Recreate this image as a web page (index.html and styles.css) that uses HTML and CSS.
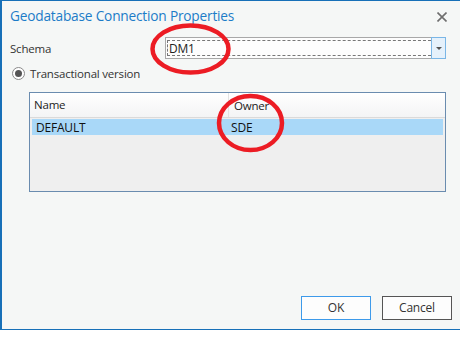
FILE: index.html
```html
<!DOCTYPE html>
<html lang="en">
<head>
  <meta charset="UTF-8">
  <title>Geodatabase Connection Properties</title>
  <link rel="stylesheet" href="styles.css">
</head>
<body>

<div class="dialog">
  <div class="titlebar">
    <div class="title">Geodatabase Connection Properties</div>
    <svg class="close" width="10" height="10" viewBox="0 0 10 10">
      <path d="M0.5 0.5 L9.5 9.5 M9.5 0.5 L0.5 9.5" stroke="#6e6e6e" stroke-width="1.6"/>
    </svg>
  </div>

  <div class="content">
    <div class="schema-row">
      <div class="label">Schema</div>
      <div class="combo">
        <div class="combo-value"><span>DM1</span></div>
        <div class="combo-btn"><span class="arrow"></span></div>
      </div>
    </div>

    <div class="radio-row">
      <span class="radio"><span class="dot"></span></span>
      <span class="label">Transactional version</span>
    </div>

    <div class="list">
      <div class="list-head">
        <div class="col col-name">Name</div>
        <div class="col col-owner">Owner</div>
      </div>
      <div class="list-row selected">
        <div class="col col-name">DEFAULT</div>
        <div class="col col-owner">SDE</div>
      </div>
    </div>
  </div>

  <div class="buttons">
    <div class="btn btn-ok">OK</div>
    <div class="btn">Cancel</div>
  </div>

  <!-- markup circles drawn over the dialog -->
  <svg class="marks" width="460" height="351" viewBox="0 0 460 351">
    <ellipse cx="190.5" cy="49" rx="38" ry="23.5" fill="none" stroke="#ec1c24" stroke-width="4.5"/>
    <ellipse cx="250.5" cy="123" rx="31.5" ry="27" fill="none" stroke="#ec1c24" stroke-width="4.5"/>
  </svg>
</div>

</body>
</html>
```

FILE: styles.css
```css
html, body {
  margin: 0;
  padding: 0;
  background: #fff;
}
body {
  font-family: 'Open Sans', 'Noto Sans', Arial, sans-serif;
  font-size: 11.5px;
  letter-spacing: -0.2px;
  color: #222;
}

.dialog {
  position: relative;
  width: 458px;
  height: 328px;
  background: #f5f7f6;
  border: 1px solid #1770b8;
  border-left-width: 2px;
  display: flex;
  flex-direction: column;
}

.titlebar {
  height: 30px;
  display: flex;
  align-items: center;
  justify-content: space-between;
  padding: 0 13px 0 8px;
}
.title {
  color: #1c7cc8;
  font-size: 13.7px;
  letter-spacing: -0.2px;
  margin-top: -1px;
}
.close {
  margin-top: 1px;
}

.content {
  flex: 1;
  padding: 6px 14px 0 8px;
}

.schema-row {
  display: flex;
  align-items: center;
  height: 22px;
}
.schema-row .label {
  width: 155px;
  color: #333;
}
.combo {
  flex: 1;
  display: flex;
  height: 20px;
  border: 1px solid #a8a8a8;
  background: #fdfdfd;
}
.combo-value {
  flex: 1;
  margin: 2px 0 2px 1px;
  border: 1px dashed #777;
  border-right: none;
  display: flex;
  align-items: center;
  padding-left: 1px;
  color: #222;
  font-size: 12px;
}
.combo-btn {
  width: 13px;
  background: #e5f1fb;
  border: 1px solid #7ab6e6;
  margin: -1px -1px -1px 0;
  display: flex;
  align-items: center;
  justify-content: center;
}
.arrow {
  width: 0;
  height: 0;
  border-left: 3px solid transparent;
  border-right: 3px solid transparent;
  border-top: 3px solid #555;
}

.radio-row {
  display: flex;
  align-items: center;
  height: 16px;
  margin-top: 6px;
  color: #333;
}
.radio {
  width: 11px;
  height: 11px;
  border: 1px solid #8a8a8a;
  border-radius: 50%;
  background: #fff;
  display: flex;
  align-items: center;
  justify-content: center;
  margin: 0 5px 0 2px;
}
.radio .dot {
  width: 7px;
  height: 7px;
  border-radius: 50%;
  background: #555;
}

.list {
  margin: 11px 0 0 19px;
  height: 98px;
  border: 1px solid #6a8caf;
  background: #efefef;
}
.list-head {
  display: flex;
  height: 24px;
  align-items: center;
  background: linear-gradient(#ffffff, #f3f4f5);
  border-bottom: 1px solid #dadada;
  color: #222;
}
.list-head .col-name {
  border-right: 1px solid #e3e3e3;
  height: 24px;
  line-height: 24px;
}
.list-row {
  display: flex;
  height: 16px;
  align-items: center;
  margin: 1px 2px 0 2px;
  color: #111;
  font-size: 12px;
}
.list-row.selected {
  background: #a9d8f8;
}
.col {
  padding-left: 4px;
}
.col-name {
  width: 194px;
}
.list-head .col-owner {
  padding-left: 5px;
}
.list-row .col-name {
  width: 192px;
}
.list-row .col-owner {
  padding-left: 3px;
}

.buttons {
  display: flex;
  justify-content: flex-end;
  gap: 11px;
  padding: 0 8px 9px 0;
}
.btn {
  width: 68px;
  height: 22px;
  line-height: 22px;
  text-align: center;
  border: 1px solid #555;
  background: #fdfdfd;
  color: #333;
  font-size: 12px;
}
.btn-ok {
  border-color: #3d9aea;
}

.marks {
  position: absolute;
  left: -2px;
  top: -1px;
  pointer-events: none;
}
```
